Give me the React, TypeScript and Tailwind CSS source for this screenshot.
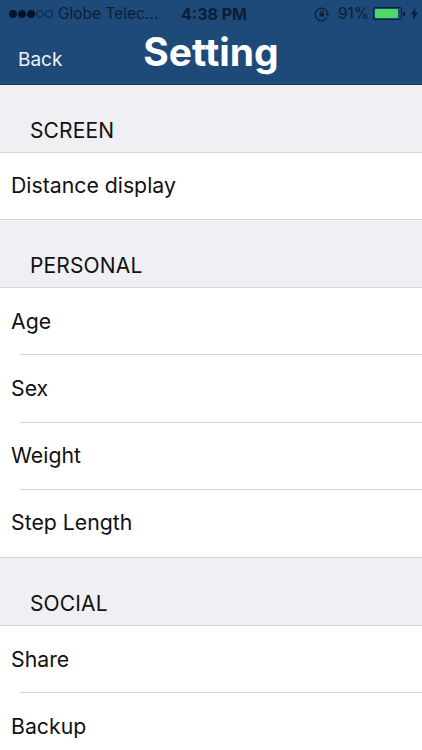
import { Fragment } from "react";

const sections = [
  { title: "SCREEN", items: ["Distance display"], row: "h-[66px]" },
  { title: "PERSONAL", items: ["Age", "Sex", "Weight", "Step Length"], row: "h-[67.25px]" },
  { title: "SOCIAL", items: ["Share", "Backup"], row: "h-[67.25px]" },
];

function StatusBar() {
  return (
    <div className="h-[27px] flex items-center text-[#0b1d38] text-[15.5px] leading-none">
      <div className="flex items-center gap-[1px] ml-[9px]">
        {[0, 1, 2].map((i) => (
          <span key={i} className="size-[8px] rounded-full bg-[#06142b]" />
        ))}
        {[0, 1].map((i) => (
          <span key={i} className="size-[8px] rounded-full border border-[#0b1d38]" />
        ))}
      </div>
      <span className="ml-[5px] w-[123px] whitespace-nowrap">Globe Telec...</span>
      <span className="w-[133px] text-[16px] font-bold whitespace-nowrap">4:38 PM</span>
      <svg width="16" height="16" viewBox="0 0 16 16" fill="none" stroke="#0b1d38" strokeWidth="1.2">
        <path d="M13.5 6.5A6.3 6.3 0 1 0 13 11.5" />
        <path d="M11.5 7.5h4l-2 2.4z" fill="#0b1d38" stroke="none" />
        <rect x="5.5" y="7" width="4.5" height="3.5" fill="#0b1d38" stroke="none" />
        <path d="M6.4 7V5.8a1.3 1.3 0 0 1 2.7 0V7" strokeWidth="0.9" />
      </svg>
      <span className="ml-[8px]">91%</span>
      <div className="ml-[4px] w-[29px] h-[13px] rounded-[2px] border border-[#0b1d38] p-[1px]">
        <div className="w-[91%] h-full bg-[#4cd964] rounded-[1px]" />
      </div>
      <span className="w-[2px] h-[4px] bg-[#0b1d38] ml-[1px]" />
      <svg className="ml-[6px]" width="7" height="13" viewBox="0 0 7 13">
        <path d="M4.6 0 0 7.4h2.8L2 13l5-7.6H4z" fill="#0b1d38" />
      </svg>
    </div>
  );
}

export default function App() {
  return (
    <div className="w-[422px] h-[750px] overflow-hidden bg-[#efeff4] text-[#111] font-['Inter','Liberation_Sans',sans-serif]">
      <header className="h-[85px] bg-[#1d4a78] border-b border-[#173a60]">
        <StatusBar />
        <div className="relative h-[50px] flex items-center justify-center">
          <span className="absolute left-[18px] top-[21px] text-[19px] leading-[24px] text-[#eef3f8]">Back</span>
          <h1 className="text-[39px] leading-[46px] font-bold text-white">Setting</h1>
        </div>
      </header>
      {sections.map((s) => (
        <Fragment key={s.title}>
          <div className="h-[67px] flex items-end pl-[30px] pb-[8px] text-[21px] leading-[26px] tracking-[0.15px]">
            {s.title}
          </div>
          <ul className="bg-white border-y border-[#d6d6da]">
            {s.items.map((item, i) => (
              <li key={item} className={`relative ${s.row} flex items-center pl-[11px] pb-[2px] text-[21.25px] leading-[28px]`}>
                {item}
                {i < s.items.length - 1 && (
                  <span className="absolute left-[20px] right-0 bottom-0 h-px bg-[#d6d6da]" />
                )}
              </li>
            ))}
          </ul>
        </Fragment>
      ))}
    </div>
  );
}
